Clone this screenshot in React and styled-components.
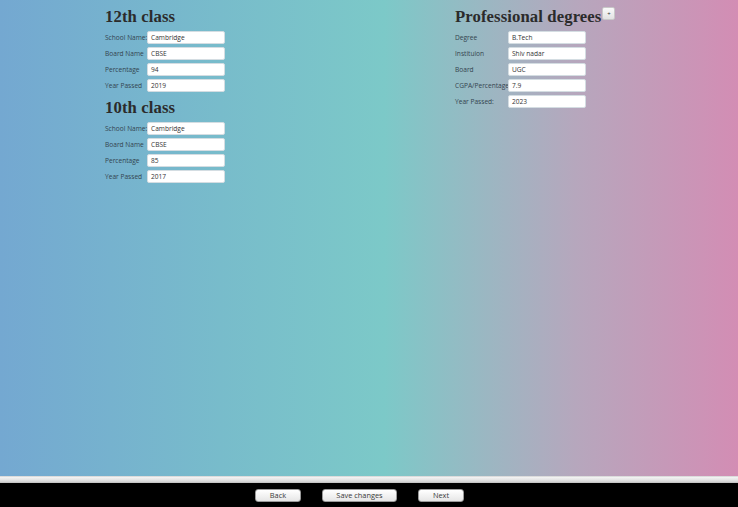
import React from "react";
import styled, { createGlobalStyle } from "styled-components";

const GlobalStyle = createGlobalStyle`
  html, body {
    margin: 0;
    padding: 0;
    height: 100%;
    overflow: hidden;
  }
  body {
    font-family: "Open Sans", "Noto Sans", sans-serif;
  }
`;

const Screen = styled.div`
  width: 738px;
  height: 507px;
  display: flex;
  flex-direction: column;
`;

const Main = styled.div`
  flex: 1;
  display: flex;
  padding: 8px 0 0 105px;
  background: linear-gradient(90deg, #74a8d1 0%, #78bccb 30%, #7cc9c8 52%, #b6a7bd 78%, #d38db4 100%);
`;

const Column = styled.section`
  width: ${({ width }) => width}px;
  display: flex;
  flex-direction: column;
`;

const TitleRow = styled.div`
  display: flex;
  align-items: flex-start;
`;

const Heading = styled.h2`
  margin: 0 0 4px;
  font-family: "Liberation Serif", "Times New Roman", serif;
  font-weight: bold;
  font-size: 16.7px;
  line-height: 18px;
  color: #2b2b2b;
  letter-spacing: 0.1px;
`;

const Spacer = styled.div`
  height: ${({ h }) => h}px;
`;

const Row = styled.div`
  display: flex;
  align-items: center;
  height: 14px;
  margin-bottom: 2px;
`;

const Label = styled.span`
  width: ${({ w }) => w}px;
  font-size: 6.6px;
  color: #34444f;
  white-space: nowrap;
`;

const Field = styled.div`
  width: 78px;
  height: 13px;
  box-sizing: border-box;
  background: #ffffff;
  border: 1px solid #d4dde2;
  border-radius: 2px;
  padding: 0 3px;
  display: flex;
  align-items: center;
  font-size: 6.6px;
  color: #333;
`;

const TinyButton = styled.div`
  width: 13px;
  height: 13px;
  margin-top: -1px;
  margin-left: 1px;
  box-sizing: border-box;
  border: 1px solid #c8c8c8;
  border-radius: 2px;
  background: linear-gradient(#fafafa, #e2e2e2);
  display: flex;
  align-items: center;
  justify-content: center;
  font-size: 6px;
  line-height: 1;
  color: #333;
`;

const ScrollStrip = styled.div`
  height: 7px;
  background: linear-gradient(#cfcfcf 0%, #f2f2f2 20%, #e4e4e4 55%, #d6d6d6 80%, #bdbdbd 100%);
`;

const BottomBar = styled.div`
  height: 24px;
  background: #000;
  display: flex;
  align-items: center;
  justify-content: center;
  gap: 21px;
  padding-right: 19px;
`;

const Button = styled.div`
  width: ${({ w }) => w}px;
  height: 13px;
  box-sizing: border-box;
  border: 1px solid #9a9a9a;
  border-radius: 3px;
  background: linear-gradient(#ffffff, #e6e6e6);
  display: flex;
  align-items: center;
  justify-content: center;
  font-size: 7.4px;
  color: #3a3a3a;
`;

const tw = [
  ["School Name:", "Cambridge"],
  ["Board Name", "CBSE"],
  ["Percentage", "94"],
  ["Year Passed", "2019"],
];

const ten = [
  ["School Name:", "Cambridge"],
  ["Board Name", "CBSE"],
  ["Percentage", "85"],
  ["Year Passed", "2017"],
];

const prof = [
  ["Degree", "B.Tech"],
  ["Instituion", "Shiv nadar"],
  ["Board", "UGC"],
  ["CGPA/Percentage", "7.9"],
  ["Year Passed:", "2023"],
];

const Rows = ({ items, labelWidth }) =>
  items.map(([label, value]) => (
    <Row key={label}>
      <Label w={labelWidth}>{label}</Label>
      <Field>{value}</Field>
    </Row>
  ));

export default function App() {
  return (
    <>
      <GlobalStyle />
      <Screen>
        <Main>
          <Column width={350}>
            <Heading>12th class</Heading>
            <Rows items={tw} labelWidth={42} />
            <Spacer h={5} />
            <Heading>10th class</Heading>
            <Rows items={ten} labelWidth={42} />
          </Column>
          <Column width={180}>
            <TitleRow>
              <Heading>Professional degrees</Heading>
              <TinyButton>+</TinyButton>
            </TitleRow>
            <Rows items={prof} labelWidth={53} />
          </Column>
        </Main>
        <ScrollStrip />
        <BottomBar>
          <Button w={46}>Back</Button>
          <Button w={75}>Save changes</Button>
          <Button w={46}>Next</Button>
        </BottomBar>
      </Screen>
    </>
  );
}
